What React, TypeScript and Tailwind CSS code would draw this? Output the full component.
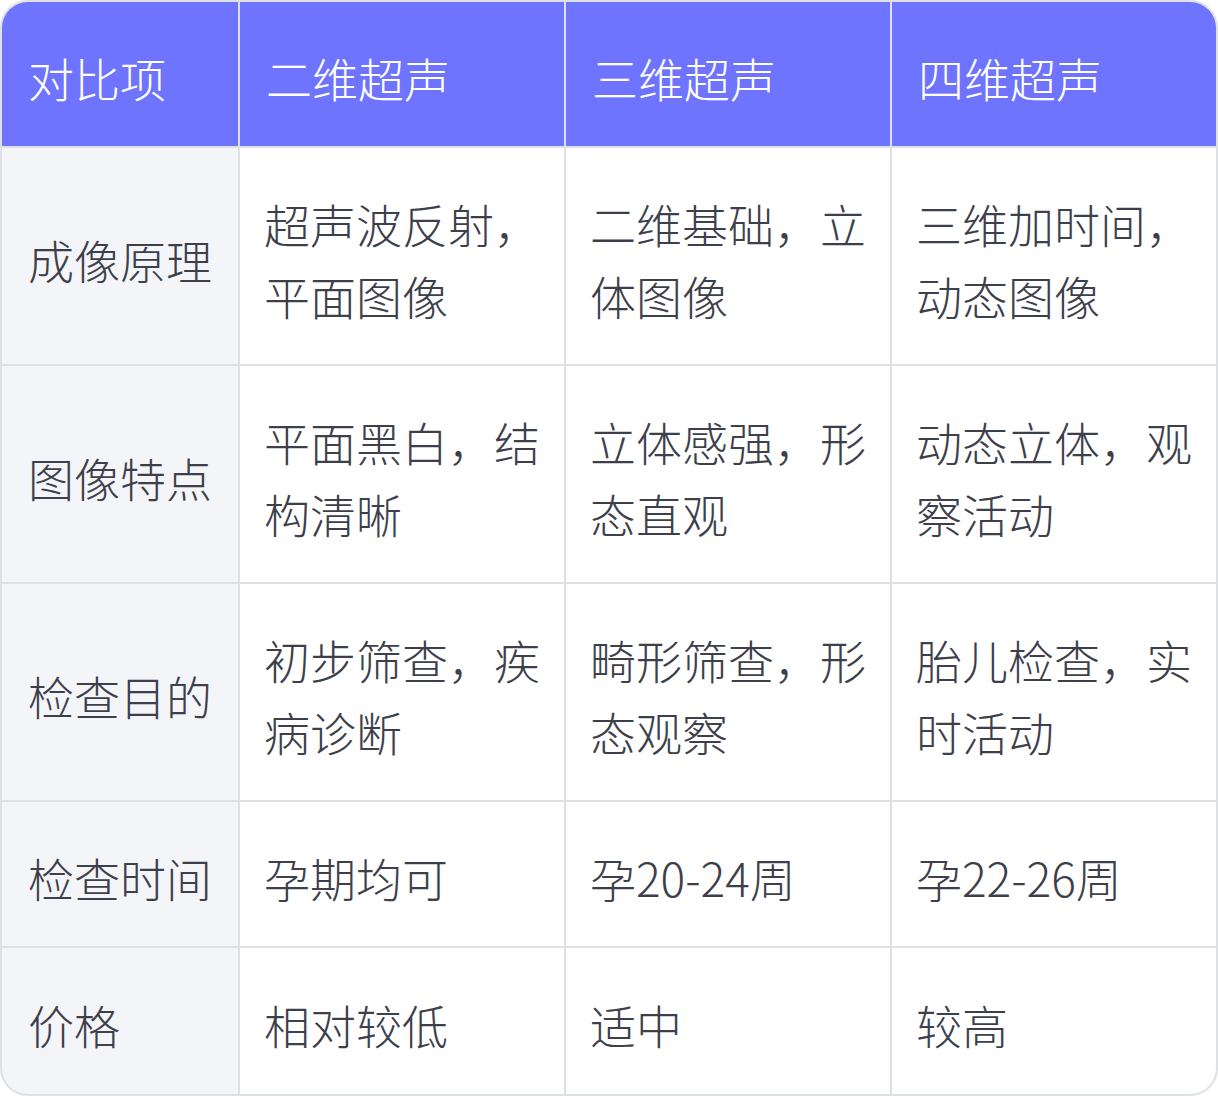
import React from "react";

const headers = ["对比项", "二维超声", "三维超声", "四维超声"];

const rows: { label: string; cells: string[]; h: string }[] = [
  { label: "成像原理", cells: ["超声波反射，平面图像", "二维基础，立体图像", "三维加时间，动态图像"], h: "h-[216px]" },
  { label: "图像特点", cells: ["平面黑白，结构清晰", "立体感强，形态直观", "动态立体，观察活动"], h: "h-[216px]" },
  { label: "检查目的", cells: ["初步筛查，疾病诊断", "畸形筛查，形态观察", "胎儿检查，实时活动"], h: "h-[216px]" },
  { label: "检查时间", cells: ["孕期均可", "孕20-24周", "孕22-26周"], h: "h-[144px]" },
  { label: "价格", cells: ["相对较低", "适中", "较高"], h: "h-[146px]" },
];

export default function App() {
  return (
    <div className="w-[1218px] h-[1096px] bg-white font-light font-['Noto_Sans_CJK_SC',sans-serif]">
      <div className="grid grid-cols-[236px_324px_324px_324px] gap-[2px] bg-[#dfe0e4] border-2 border-[#dfe0e4] rounded-[28px] overflow-hidden">
        {headers.map((h) => (
          <div
            key={h}
            className="h-[144px] bg-[#6f74ff] text-white text-[46px] leading-[72px] pl-[26px] pr-[20px] pt-[6px] flex items-center"
          >
            {h}
          </div>
        ))}
        {rows.map((r) => (
          <React.Fragment key={r.label}>
            <div
              className={`${r.h} bg-[#f4f5f9] text-[#3d404b] text-[46px] leading-[72px] pl-[26px] pr-[10px] pt-[6px] flex items-center`}
            >
              {r.label}
            </div>
            {r.cells.map((c, i) => (
              <div
                key={i}
                className={`${r.h} bg-white text-[#3d404b] text-[46px] leading-[72px] pl-[24px] pr-[22px] pt-[6px] flex items-center`}
              >
                <span>{c}</span>
              </div>
            ))}
          </React.Fragment>
        ))}
      </div>
    </div>
  );
}
